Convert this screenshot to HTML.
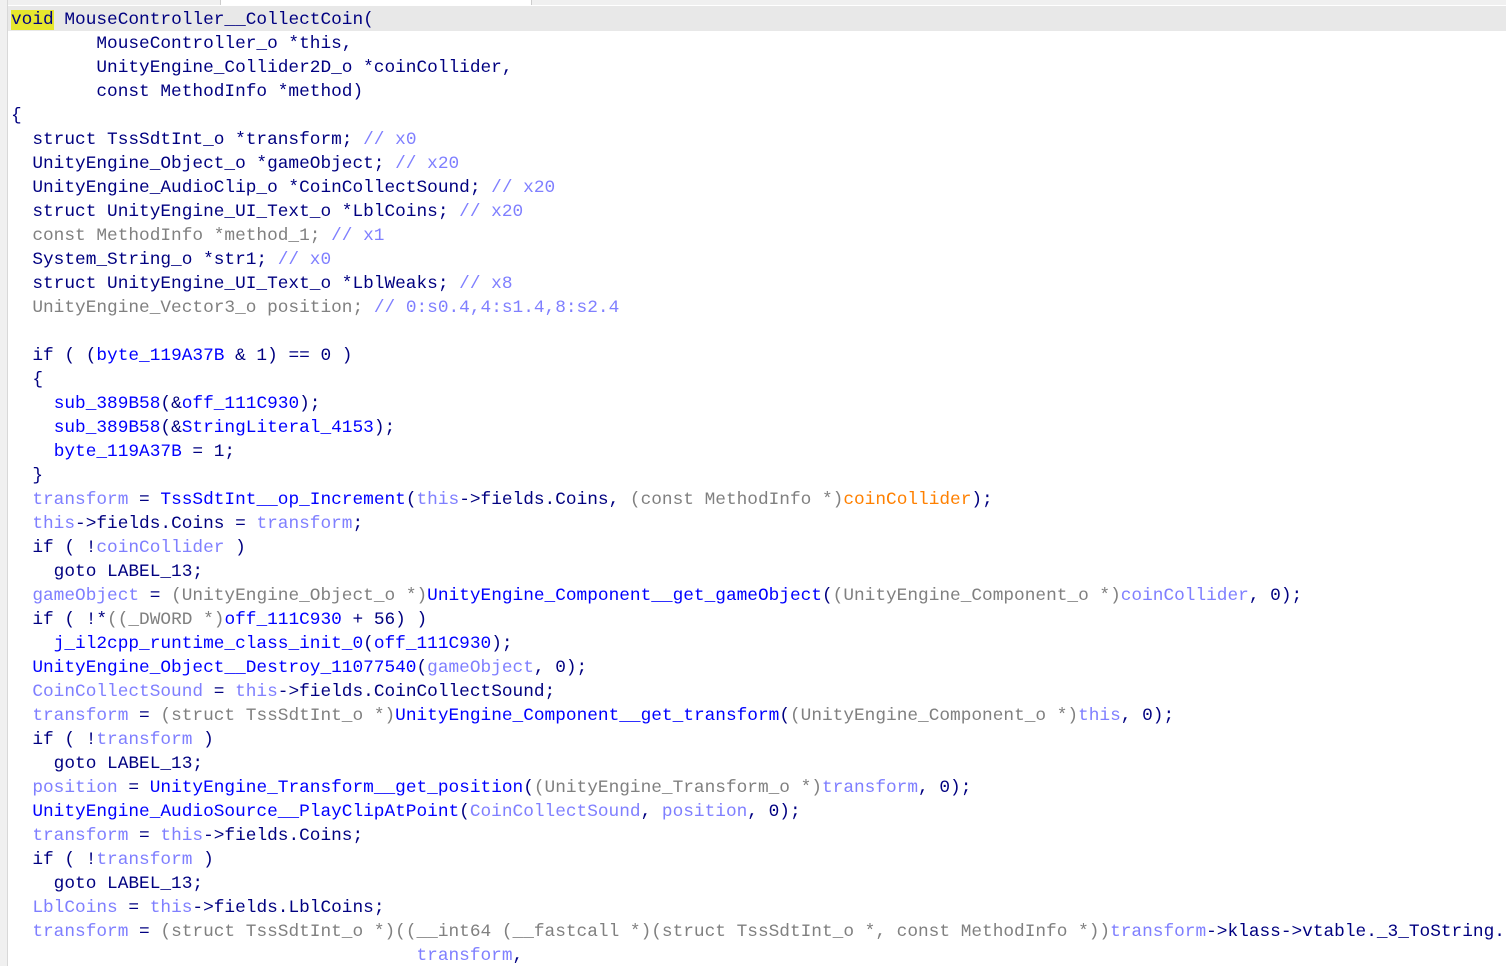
<!DOCTYPE html><html><head><style>
html,body{margin:0;width:1506px;height:966px;overflow:hidden;background:#fff;position:relative}
#gut{position:absolute;left:0;top:0;width:7px;height:966px;background:#f0f0f0;border-right:1px solid #d8d8d8}
#top{position:absolute;left:0;top:0;width:1506px;height:5px;background:#f0f0f0}
#top2{position:absolute;left:220px;top:0;width:310px;height:5px;background:#fff;border-left:1px solid #ccc;border-right:1px solid #ccc}
#hl{position:absolute;left:8px;top:6px;width:1498px;height:25px;background:#e8e8e8}
#wrap{position:absolute;left:11px;top:8px;width:1495px;height:958px;overflow:hidden}
pre{margin:0;font-family:"Liberation Mono",monospace;font-size:17.8px;line-height:24px;color:#000080;white-space:pre}
.b{color:#0000ff}.v{color:#7f7fff}.g{color:#808080}.o{color:#ff8000}.y{background:#e6e62e}
</style></head><body><div id="top"></div><div id="top2"></div><div id="gut"></div><div id="hl"></div>
<div id="wrap"><pre><span class="y">void</span> MouseController__CollectCoin(
        MouseController_o *this,
        UnityEngine_Collider2D_o *coinCollider,
        const MethodInfo *method)
{
  struct TssSdtInt_o *transform; <span class="v">// x0</span>
  UnityEngine_Object_o *gameObject; <span class="v">// x20</span>
  UnityEngine_AudioClip_o *CoinCollectSound; <span class="v">// x20</span>
  struct UnityEngine_UI_Text_o *LblCoins; <span class="v">// x20</span>
<span class="g">  const MethodInfo *method_1;</span> <span class="v">// x1</span>
  System_String_o *str1; <span class="v">// x0</span>
  struct UnityEngine_UI_Text_o *LblWeaks; <span class="v">// x8</span>
<span class="g">  UnityEngine_Vector3_o position;</span> <span class="v">// 0:s0.4,4:s1.4,8:s2.4</span>

  if ( (<span class="b">byte_119A37B</span> &amp; 1) == 0 )
  {
    <span class="b">sub_389B58</span>(&amp;<span class="b">off_111C930</span>);
    <span class="b">sub_389B58</span>(&amp;<span class="b">StringLiteral_4153</span>);
    <span class="b">byte_119A37B</span> = 1;
  }
  <span class="v">transform</span> = <span class="b">TssSdtInt__op_Increment</span>(<span class="v">this</span>-&gt;fields.Coins, <span class="g">(const MethodInfo *)</span><span class="o">coinCollider</span>);
  <span class="v">this</span>-&gt;fields.Coins = <span class="v">transform</span>;
  if ( !<span class="v">coinCollider</span> )
    goto LABEL_13;
  <span class="v">gameObject</span> = <span class="g">(UnityEngine_Object_o *)</span><span class="b">UnityEngine_Component__get_gameObject</span>(<span class="g">(UnityEngine_Component_o *)</span><span class="v">coinCollider</span>, 0);
  if ( !*<span class="g">((_DWORD *)</span><span class="b">off_111C930</span> + 56) )
    <span class="b">j_il2cpp_runtime_class_init_0</span>(<span class="b">off_111C930</span>);
  <span class="b">UnityEngine_Object__Destroy_11077540</span>(<span class="v">gameObject</span>, 0);
  <span class="v">CoinCollectSound</span> = <span class="v">this</span>-&gt;fields.CoinCollectSound;
  <span class="v">transform</span> = <span class="g">(struct TssSdtInt_o *)</span><span class="b">UnityEngine_Component__get_transform</span>(<span class="g">(UnityEngine_Component_o *)</span><span class="v">this</span>, 0);
  if ( !<span class="v">transform</span> )
    goto LABEL_13;
  <span class="v">position</span> = <span class="b">UnityEngine_Transform__get_position</span>(<span class="g">(UnityEngine_Transform_o *)</span><span class="v">transform</span>, 0);
  <span class="b">UnityEngine_AudioSource__PlayClipAtPoint</span>(<span class="v">CoinCollectSound</span>, <span class="v">position</span>, 0);
  <span class="v">transform</span> = <span class="v">this</span>-&gt;fields.Coins;
  if ( !<span class="v">transform</span> )
    goto LABEL_13;
  <span class="v">LblCoins</span> = <span class="v">this</span>-&gt;fields.LblCoins;
  <span class="v">transform</span> = <span class="g">(struct TssSdtInt_o *)((__int64 (__fastcall *)(struct TssSdtInt_o *, const MethodInfo *))</span><span class="v">transform</span>-&gt;klass-&gt;vtable._3_ToString.
                                      <span class="v">transform</span>,</pre></div>
</body></html>
